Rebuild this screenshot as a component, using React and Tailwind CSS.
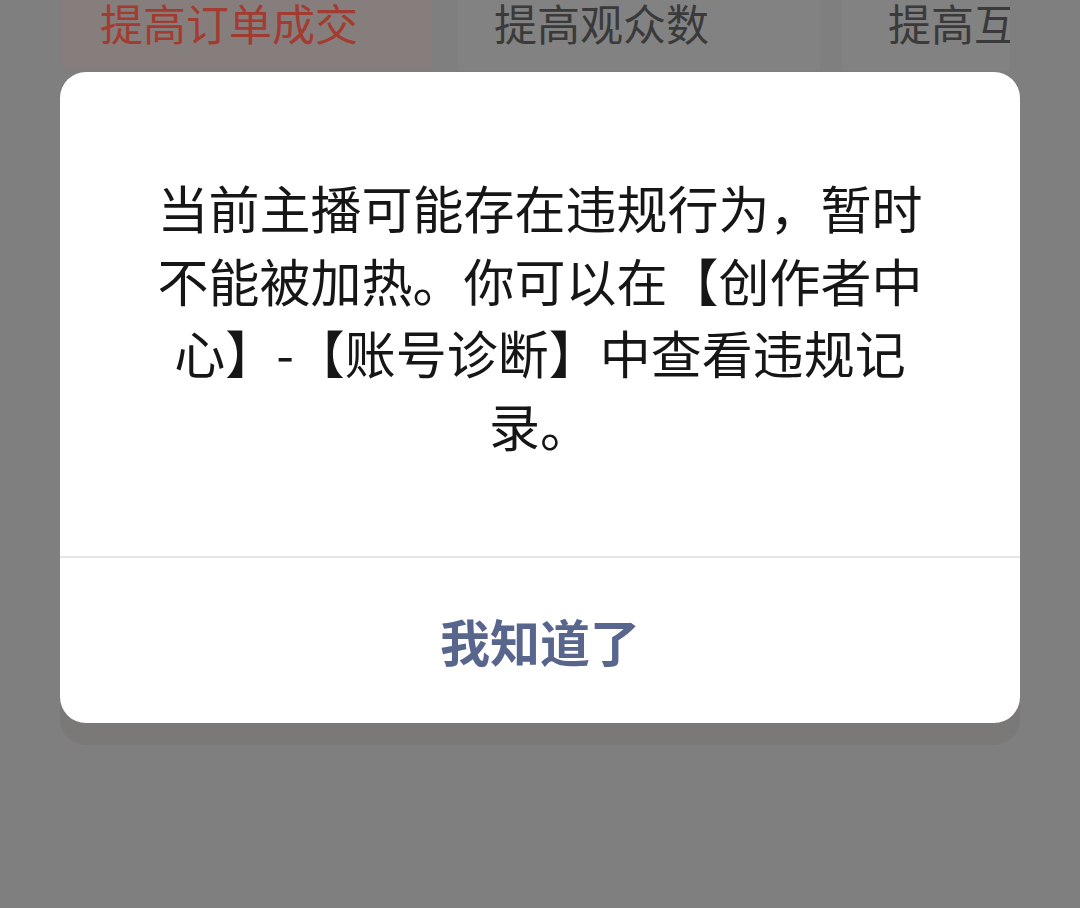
export default function App() {
  const font = { fontFamily: '"Noto Sans CJK SC", "Noto Sans", sans-serif' };
  return (
    <div className="w-[1080px] h-[908px] bg-[#7f7f7f] overflow-hidden flex flex-col" style={font}>
      <div className="flex h-[70px] shrink-0 pl-[62px]">
        <div className="w-[370px] h-full bg-[#867e7d] pl-[38px]">
          <span className="block text-[43px] leading-[44px] text-[#a33c30] whitespace-nowrap">提高订单成交</span>
        </div>
        <div className="ml-[26px] w-[362px] h-full bg-[#828282] pl-[36px]">
          <span className="block text-[43px] leading-[44px] text-[#3a3a3a] whitespace-nowrap">提高观众数</span>
        </div>
        <div className="ml-[22px] w-[168px] h-full bg-[#828282] pl-[46px] overflow-hidden">
          <span className="block text-[43px] leading-[44px] text-[#3a3a3a] whitespace-nowrap">提高互</span>
        </div>
      </div>
      <div className="mx-[60px] mt-[2px] w-[960px] bg-white rounded-[26px] shadow-[0_22px_0_rgba(110,100,100,0.25)] flex flex-col">
        <div className="pt-[99px] pb-[94px] px-[40px] text-center text-[51px] leading-[72.7px] text-[#161616]">
          <div>当前主播可能存在违规行为，暂时</div>
          <div>不能被加热。你可以在【创作者中</div>
          <div>心】-【账号诊断】中查看违规记</div>
          <div>录。</div>
        </div>
        <div className="h-[2px] bg-[#e6e6e6]" />
        <div className="h-[165px] flex items-center justify-center">
          <span className="text-[50px] font-bold text-[#58668e] leading-none">我知道了</span>
        </div>
      </div>
    </div>
  );
}
